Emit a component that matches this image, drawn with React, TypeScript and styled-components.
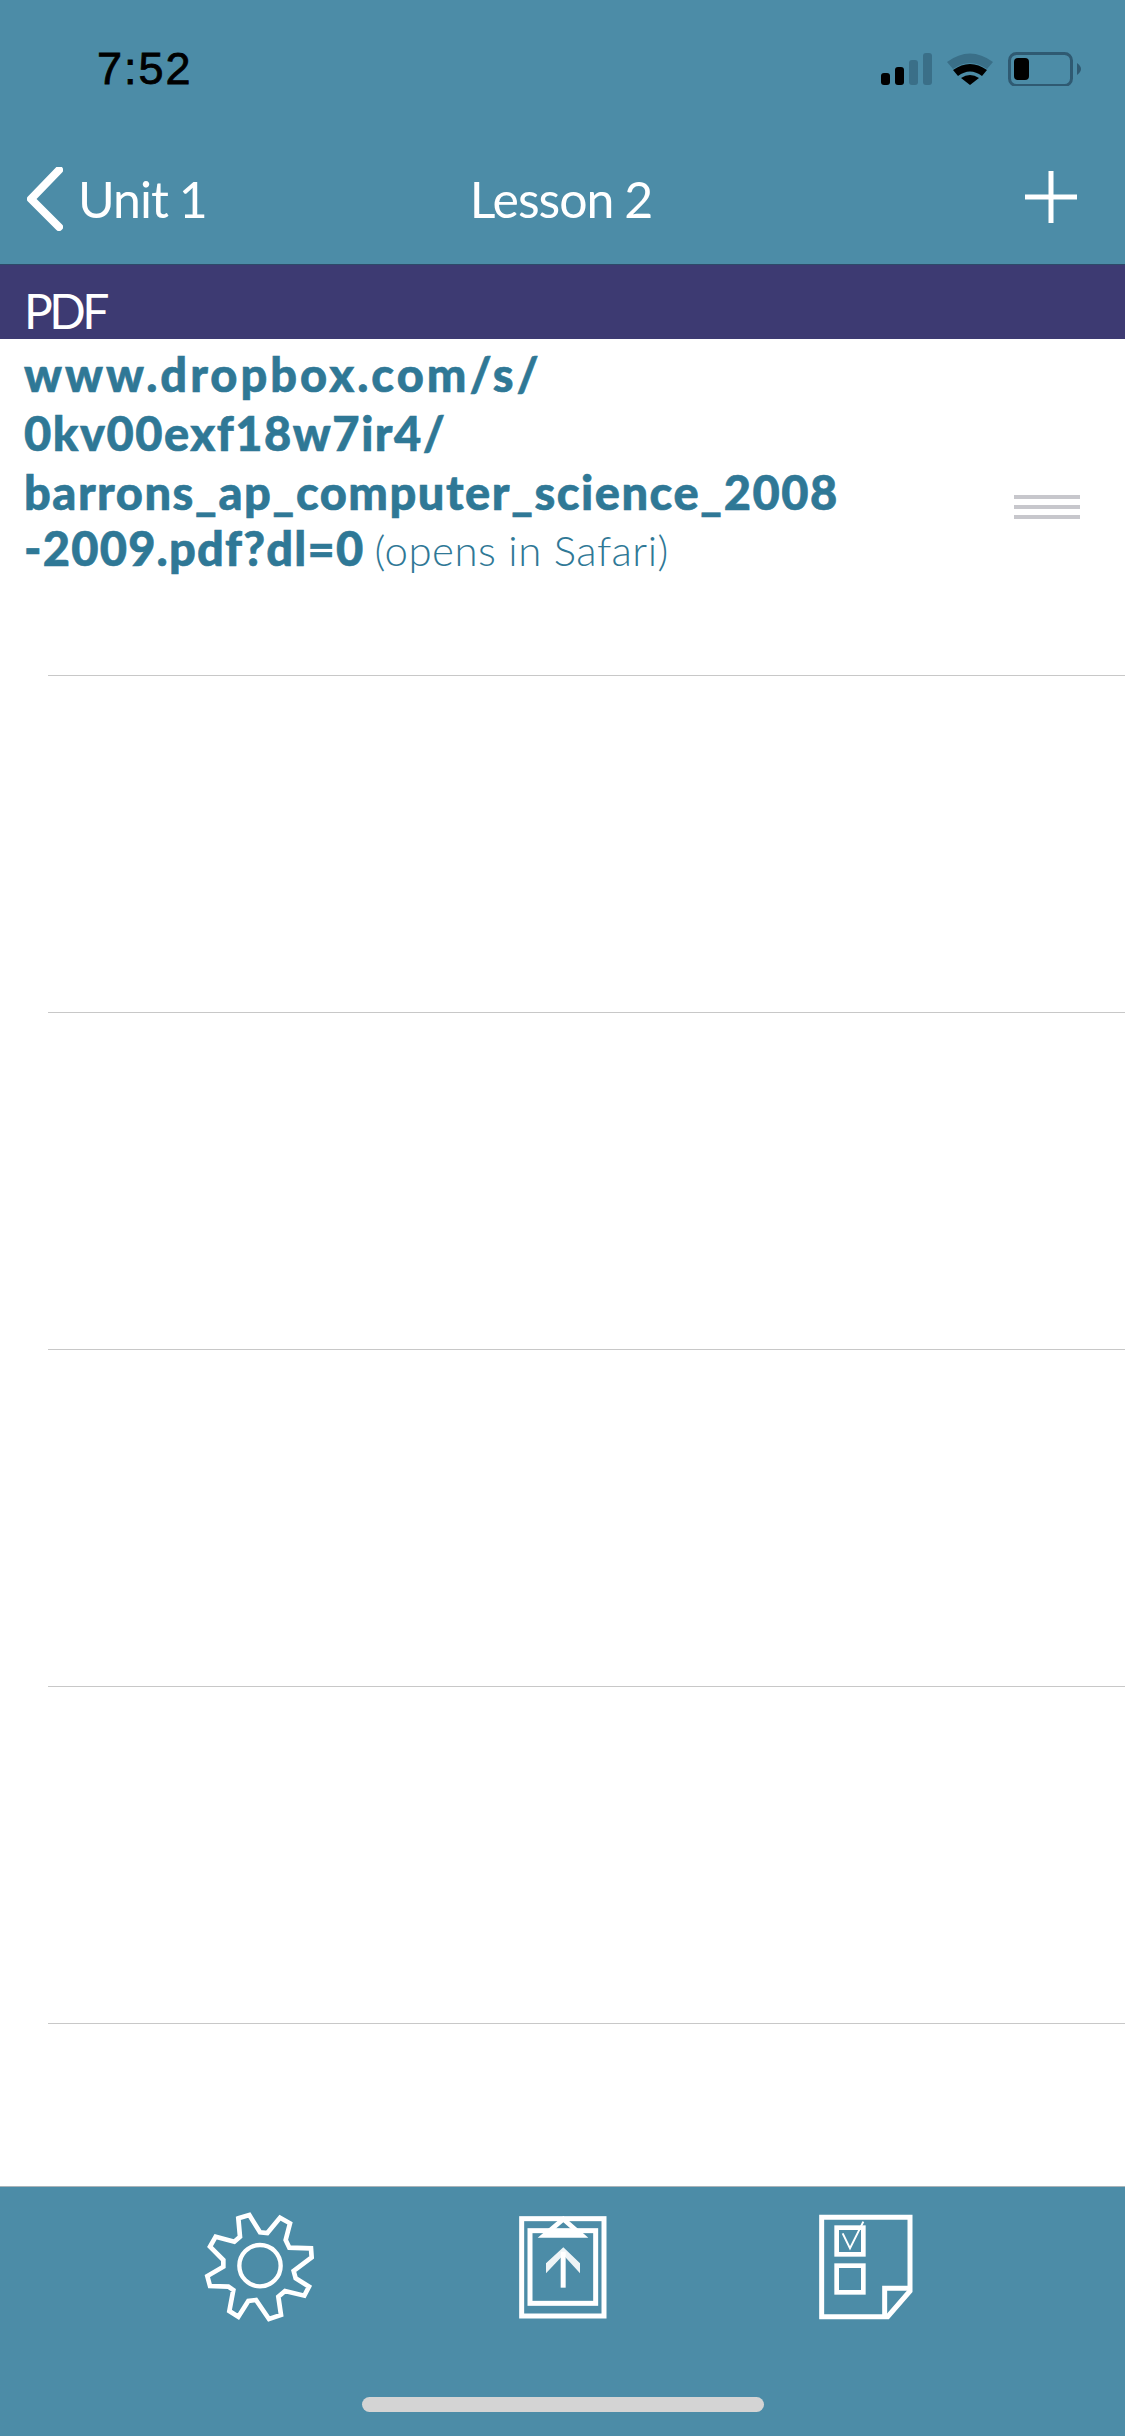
import React from 'react';
import styled, { createGlobalStyle } from 'styled-components';

const GlobalStyle = createGlobalStyle`
  html, body {
    margin: 0;
    padding: 0;
    background: #fff;
  }
`;

const Screen = styled.div`
  width: 1125px;
  height: 2436px;
  display: flex;
  flex-direction: column;
  overflow: hidden;
  background: #fff;
  font-family: Lato, 'Open Sans', sans-serif;
`;
const Header = styled.header`
  height: 265px;
  box-sizing: border-box;
  background: #4c8ca7;
  border-bottom: 1px solid #2d4a68;
`;
const StatusBar = styled.div`
  height: 138px;
  box-sizing: border-box;
  padding: 0 44px 0 97px;
  display: flex;
  align-items: center;
  justify-content: space-between;
`;
const Time = styled.span`
  font-family: 'Liberation Sans', Arial, sans-serif;
  font-size: 45px;
  letter-spacing: 2px;
  color: #000;
  -webkit-text-stroke: 0.8px #000;
`;
const NavBar = styled.nav`
  height: 126px;
  box-sizing: border-box;
  padding: 29px 30px 0 27px;
  display: grid;
  grid-template-columns: 1fr auto 1fr;
  align-items: start;
`;
const BackLink = styled.div`
  display: flex;
  align-items: flex-start;
  gap: 15px;
`;
const NavText = styled.span`
  font-size: 50px;
  line-height: 64px;
  color: #fff;
  letter-spacing: -1px;
  word-spacing: -1px;
`;
const AddIcon = styled.svg`
  justify-self: end;
  margin: 4px 18px 0 0;
`;
const SectionBand = styled.div`
  height: 74px;
  box-sizing: border-box;
  padding: 18px 24px 0;
  background: #3d3a72;
  color: #fff;
  font-size: 48px;
  line-height: 56px;
  letter-spacing: -3.5px;
`;
const List = styled.div`
  flex: 1;
  min-height: 0;
  overflow: hidden;
`;
const Row = styled.div`
  height: 336px;
  box-sizing: border-box;
  padding: 6px 45px 0 24px;
  display: flex;
  align-items: flex-start;
  justify-content: space-between;
`;
const Separator = styled.div`
  height: 1px;
  margin-left: 48px;
  background: #c8c8c8;
`;
const LinkText = styled.div`
  color: #2f7896;
  font-size: 47px;
  line-height: 59px;
`;
const LinkLine = styled.div<{ $track?: number; $pull?: boolean }>`
  font-weight: 900;
  white-space: nowrap;
  letter-spacing: ${(p) => p.$track ?? 1.5}px;
  -webkit-text-stroke: 0.6px #2f7896;
  margin-top: ${(p) => (p.$pull ? '-3px' : '0')};
`;
const Hint = styled.span`
  font-weight: 300;
  font-size: 42px;
  letter-spacing: 0.5px;
  margin-left: 10px;
  -webkit-text-stroke: 0;
`;
const DragHandle = styled.div`
  width: 66px;
  margin-top: 150px;
  display: flex;
  flex-direction: column;
  gap: 6px;
`;
const DragBar = styled.div`
  height: 4px;
  background: #c7c7cc;
`;
const Toolbar = styled.footer`
  height: 250px;
  box-sizing: border-box;
  padding-top: 18px;
  background: #4c8ca7;
  border-top: 1px solid #a9b4b9;
  display: flex;
  flex-direction: column;
`;
const ToolIcons = styled.div`
  display: flex;
  padding-left: 195px;
  gap: 180px;
`;
const HomeBar = styled.div`
  width: 402px;
  height: 15px;
  margin: 67px auto 0;
  border-radius: 8px;
  background: #d4d4d4;
`;

const gearPoints =
  '130,40 163,30 195,82 217,84 255,38 285,55 272,105 283,128 348,130 350,157 296,198 302,220 342,245 328,272 270,258 250,275 258,330 222,342 183,285 160,288 130,335 103,318 115,255 100,245 45,243 37,213 85,185 85,165 45,125 62,95 118,110 135,95';

function StatusIcons() {
  return (
    <svg width="200" height="34" viewBox="0 0 200 34">
      <rect x="0" y="21" width="9" height="12" rx="3" fill="#000" />
      <rect x="14" y="15" width="9" height="18" rx="3" fill="#000" />
      <rect x="28" y="8" width="9" height="25" rx="3" fill="#3a6f88" />
      <rect x="42" y="1" width="9" height="32" rx="3" fill="#3a6f88" />
      <path d="M66 10 Q89 -7 112 10 L106 17 Q89 5 72 17 Z" fill="#3a6f88" />
      <path d="M72 18 Q89 6 106 18 L101 24 Q89 15 77 24 Z" fill="#000" />
      <path d="M80 26 Q89 20 98 26 L89 33 Z" fill="#000" />
      <rect x="128.5" y="1.5" width="62" height="32" rx="7" fill="none" stroke="#2f5a72" strokeWidth="3" />
      <rect x="133" y="6" width="15" height="22" rx="4" fill="#000" />
      <path d="M196 11 Q200 14 200 17 Q200 20 196 23 Z" fill="#2f5a72" />
    </svg>
  );
}

function GearIcon() {
  return (
    <svg width="130" height="125" viewBox="0 0 390 375" fill="none" stroke="#fff">
      <polygon points={gearPoints} strokeWidth="14" strokeLinejoin="miter" />
      <circle cx="195" cy="182" r="62" strokeWidth="13" />
    </svg>
  );
}

function ClipboardIcon() {
  return (
    <svg width="121" height="125" viewBox="0 0 363 375" fill="none" stroke="#fff">
      <rect x="50" y="41" width="247" height="292" strokeWidth="15" />
      <rect x="75" y="77" width="197" height="218" strokeWidth="15" />
      <path
        fillRule="evenodd"
        stroke="none"
        fill="#fff"
        d="M175 33 L250 98 L98 98 Z M175 52 L137 84 L212 84 Z"
      />
      <path d="M175 127 L225 175 L225 205 L175 150 L123 205 L123 175 Z" fill="#eef4f6" stroke="none" />
      <rect x="167" y="140" width="15" height="108" fill="#fff" stroke="none" />
    </svg>
  );
}

function NoteIcon() {
  return (
    <svg width="120" height="125" viewBox="0 0 360 375" fill="none" stroke="#fff">
      <path d="M47 37 H312 V258 L245 335 H47 Z" strokeWidth="15" />
      <path d="M236 335 V250 H312" strokeWidth="15" />
      <rect x="92" y="68" width="80" height="80" strokeWidth="14" />
      <path d="M110 85 L132 130 L172 50" strokeWidth="6" />
      <rect x="92" y="182" width="80" height="80" strokeWidth="14" />
    </svg>
  );
}

export default function App() {
  return (
    <Screen>
      <GlobalStyle />
      <Header>
        <StatusBar>
          <Time>7:52</Time>
          <StatusIcons />
        </StatusBar>
        <NavBar>
          <BackLink>
            <svg width="36" height="64" viewBox="0 0 36 64" fill="none">
              <path d="M32 3 L4 32 L32 60" stroke="#fff" strokeWidth="8" strokeLinecap="round" strokeLinejoin="round" />
            </svg>
            <NavText>Unit 1</NavText>
          </BackLink>
          <NavText>Lesson 2</NavText>
          <AddIcon width="52" height="52" viewBox="0 0 52 52">
            <path d="M26 0 V52 M0 26 H52" stroke="#fff" strokeWidth="5" />
          </AddIcon>
        </NavBar>
      </Header>
      <SectionBand>PDF</SectionBand>
      <List>
        <Row>
          <LinkText>
            <LinkLine $track={3}>www.dropbox.com/s/</LinkLine>
            <LinkLine>0kv00exf18w7ir4/</LinkLine>
            <LinkLine>barrons_ap_computer_science_2008</LinkLine>
            <LinkLine $track={1.2} $pull>
              -2009.pdf?dl=0<Hint>(opens in Safari)</Hint>
            </LinkLine>
          </LinkText>
          <DragHandle>
            <DragBar />
            <DragBar />
            <DragBar />
          </DragHandle>
        </Row>
        <Separator />
        <Row />
        <Separator />
        <Row />
        <Separator />
        <Row />
        <Separator />
        <Row />
        <Separator />
      </List>
      <Toolbar>
        <ToolIcons>
          <GearIcon />
          <ClipboardIcon />
          <NoteIcon />
        </ToolIcons>
        <HomeBar />
      </Toolbar>
    </Screen>
  );
}
